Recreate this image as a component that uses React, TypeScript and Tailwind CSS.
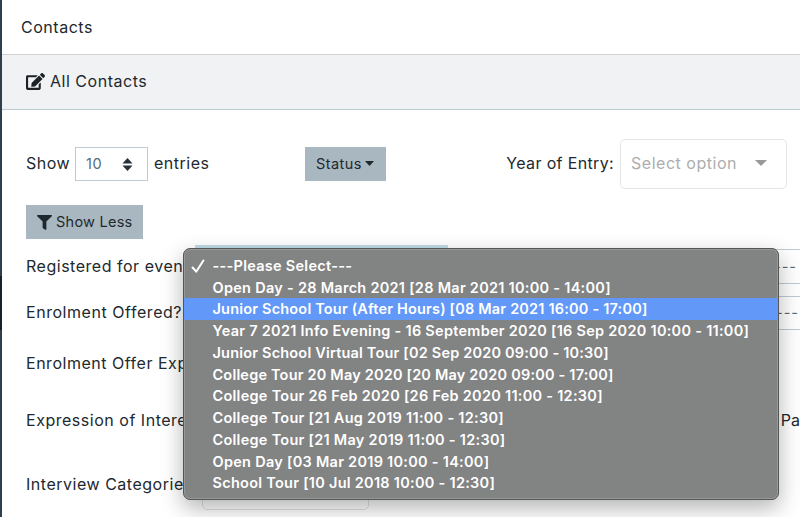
import { FaEdit, FaFilter } from "react-icons/fa";
import clsx from "clsx";

const EVENTS = [
  { name: "---Please Select---" },
  { name: "Open Day - 28 March 2021 [28 Mar 2021 10:00 - 14:00]" },
  { name: "Junior School Tour (After Hours) [08 Mar 2021 16:00 - 17:00]", tight: true },
  { name: "Year 7 2021 Info Evening - 16 September 2020 [16 Sep 2020 10:00 - 11:00]" },
  { name: "Junior School Virtual Tour [02 Sep 2020 09:00 - 10:30]", tight: true },
  { name: "College Tour 20 May 2020 [20 May 2020 09:00 - 17:00]", tight: true },
  { name: "College Tour 26 Feb 2020 [26 Feb 2020 11:00 - 12:30]" },
  { name: "College Tour [21 Aug 2019 11:00 - 12:30]" },
  { name: "College Tour [21 May 2019 11:00 - 12:30]" },
  { name: "Open Day [03 Mar 2019 10:00 - 14:00]" },
  { name: "School Tour [10 Jul 2018 10:00 - 12:30]" },
];

const SELECTED = 0;
const HIGHLIGHTED = 2;

function EventMenu() {
  return (
    <ul
      role="listbox"
      className="absolute left-[183px] top-[248px] h-[252px] w-[596px] rounded-[7px] border border-[#555656] bg-[#828383] pt-[5.7px] shadow-[inset_0_0_0_1px_#979898,0_8px_22px_rgba(0,0,0,0.3)]"
    >
      {EVENTS.map(({ name, tight }, i) => (
        <li
          key={name}
          role="option"
          aria-selected={i === SELECTED}
          className={clsx(
            "flex h-[21.75px] items-center whitespace-nowrap text-[14.5px] font-semibold text-white",
            tight ? "tracking-[0.19px]" : "tracking-[0.27px]",
            i === HIGHLIGHTED && "bg-[#6298f8]",
          )}
        >
          <span className="flex w-[28.5px] shrink-0 justify-center">
            {i === SELECTED && (
              <svg width="14" height="14" viewBox="0 0 14 14" fill="none" stroke="#fff" strokeWidth="2" strokeLinecap="round" strokeLinejoin="round">
                <path d="M1.600 8.500 5.200 12.700 12.400 1.500" />
              </svg>
            )}
          </span>
          <span className="pt-[0.6px]">{name}</span>
        </li>
      ))}
    </ul>
  );
}

function Toolbar() {
  return (
    <div className="flex h-[50px] items-center">
      <div className="flex w-[279px] items-center">
        <span className="w-[49px] pb-[2px]">Show</span>
        <div className="flex h-[34px] w-[73px] items-center justify-between border border-[#becbd3] pl-[10px] pr-[14px] text-[14.5px] text-[#536c79]">
          10
          <svg width="11" height="13" viewBox="0 0 11 13" fill="#263238">
            <path d="M5.500 0 10.500 5.500H.5zM5.500 13 .5 7.500h10z" />
          </svg>
        </div>
        <span className="ml-[6px] pb-[2px]">entries</span>
      </div>
      <button className="flex h-[34px] w-[81px] items-center bg-[#a9b7c0] pl-[11px] text-[14.5px] tracking-[0.45px] text-[#1f282d]">
        Status
        <svg className="mb-[2px] ml-[3px]" width="9" height="5" viewBox="0 0 9 5" fill="#1f282d">
          <path d="M0 0h9L4.500 5z" />
        </svg>
      </button>
      <span className="ml-auto pb-[2px] tracking-[0.35px]">Year of Entry:</span>
      <div className="ml-[6px] flex h-[50px] w-[167px] items-center justify-between rounded-[5px] border border-[#e5e5e5] pb-[2px] pl-[10px] pr-[19px] text-[#adadad]">
        Select option
        <svg width="12" height="6" viewBox="0 0 12 6" fill="#999">
          <path d="M0 0h12L6 6z" />
        </svg>
      </div>
    </div>
  );
}

function FilterForm() {
  return (
    <div className="flex flex-col">
      <div className="flex h-[42px] items-center">
        <span className="w-[169px] overflow-hidden whitespace-nowrap">Registered for event:</span>
        <div className="h-[41px] w-[253px] self-start border border-t-[3px] border-[#bfdce8]" />
        <div className="ml-auto mt-px flex h-[35px] w-[160px] items-center justify-end border border-r-0 border-[#becbd3] text-[14.5px] tracking-[1px] text-[#536c79]">
          <span className="pr-[3px]">---Please Select---</span>
        </div>
      </div>
      <div className="flex h-[51px] items-center">
        <span className="pb-px tracking-[0.55px]">Enrolment Offered?</span>
        <div className="ml-auto mt-px flex h-[34px] w-[160px] items-center justify-end border border-r-0 border-[#becbd3] text-[14.5px] tracking-[1px] text-[#536c79]">
          <span className="pr-px">---Please Select---</span>
        </div>
      </div>
      <div className="flex h-[50px] items-center">Enrolment Offer Exp</div>
      <div className="flex h-[64px] items-center">
        <span className="w-[756px]">Expression of Interest</span>
        <span className="tracking-normal">Pa</span>
      </div>
      <div className="flex h-[64px] items-center">
        <span className="w-[176px]">Interview Categories</span>
        <div className="mt-px h-[51px] w-[167px] rounded-[5px] border border-[#e2e2e2]" />
      </div>
    </div>
  );
}

export default function App() {
  return (
    <div className="relative flex h-[517px] w-[800px] overflow-hidden bg-white font-['Inter','Liberation_Sans',sans-serif] text-[16px] leading-[22px] tracking-[0.52px] text-[#22292e]">
      <aside className="flex w-[2px] shrink-0 flex-col bg-[#2f404c]">
        <div className="mt-[276px] h-[54px] bg-[#17232b]" />
      </aside>
      <main className="min-w-0 flex-1">
        <header className="flex h-[55px] items-center border-b border-[#cfd3d6] pl-[19px]">Contacts</header>
        <div className="flex h-[55px] items-center border-b border-[#bccad2] bg-[#f0f2f4] pb-[2px] pl-[24px]">
          <FaEdit className="mr-[5px] size-[19px] text-[#1c2226]" />
          All Contacts
        </div>
        <section className="pl-[24px] pt-[29px]">
          <div className="pr-[13px]">
            <Toolbar />
          </div>
          <button className="mb-[6px] mt-[16px] flex h-[34px] w-[117px] items-center bg-[#a9b7c0] pl-[11px] text-[14.5px] tracking-[0.25px] text-[#1f282d]">
            <FaFilter className="mr-[4px] size-[15px]" />
            Show Less
          </button>
          <FilterForm />
        </section>
      </main>
      <EventMenu />
    </div>
  );
}
